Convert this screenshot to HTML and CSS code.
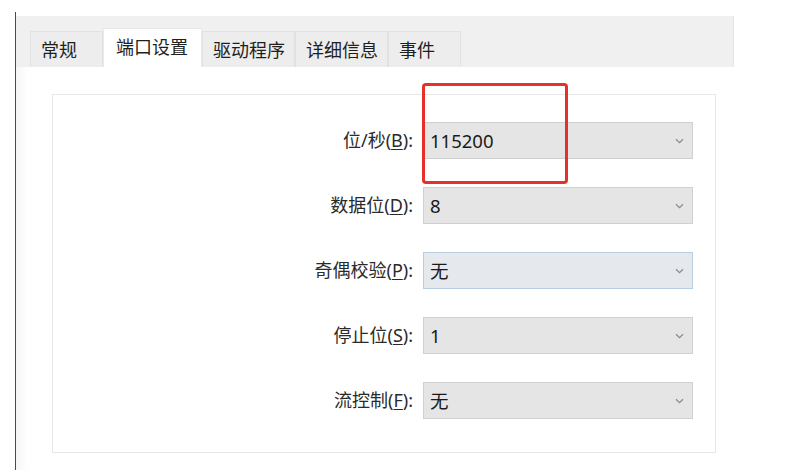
FILE: index.html
```html
<!DOCTYPE html>
<html lang="zh-CN">
<head>
<meta charset="utf-8">
<title>端口设置</title>
<link rel="stylesheet" href="styles.css">
</head>
<body>
<div class="window">
  <div class="tabstrip">
    <div class="tab">常规</div>
    <div class="tab active">端口设置</div>
    <div class="tab">驱动程序</div>
    <div class="tab">详细信息</div>
    <div class="tab">事件</div>
  </div>
  <div class="page">
    <div class="groupbox">
      <div class="label">位/秒(<u>B</u>):</div>
      <div class="combo"><span class="value">115200</span><svg class="chev" width="9" height="6" viewBox="0 0 9 6"><path d="M1 1.2 L4.5 4.6 L8 1.2" fill="none" stroke="#8a8a8a" stroke-width="1.2"/></svg></div>

      <div class="label">数据位(<u>D</u>):</div>
      <div class="combo"><span class="value">8</span><svg class="chev" width="9" height="6" viewBox="0 0 9 6"><path d="M1 1.2 L4.5 4.6 L8 1.2" fill="none" stroke="#8a8a8a" stroke-width="1.2"/></svg></div>

      <div class="label">奇偶校验(<u>P</u>):</div>
      <div class="combo hover"><span class="value">无</span><svg class="chev" width="9" height="6" viewBox="0 0 9 6"><path d="M1 1.2 L4.5 4.6 L8 1.2" fill="none" stroke="#8a8a8a" stroke-width="1.2"/></svg></div>

      <div class="label">停止位(<u>S</u>):</div>
      <div class="combo"><span class="value">1</span><svg class="chev" width="9" height="6" viewBox="0 0 9 6"><path d="M1 1.2 L4.5 4.6 L8 1.2" fill="none" stroke="#8a8a8a" stroke-width="1.2"/></svg></div>

      <div class="label">流控制(<u>F</u>):</div>
      <div class="combo"><span class="value">无</span><svg class="chev" width="9" height="6" viewBox="0 0 9 6"><path d="M1 1.2 L4.5 4.6 L8 1.2" fill="none" stroke="#8a8a8a" stroke-width="1.2"/></svg></div>
    </div>
  </div>
</div>
<div class="highlight"></div>
</body>
</html>
```
FILE: styles.css
```css
html, body {
  margin: 0;
  padding: 0;
  background: #ffffff;
}
body {
  font-family: "Noto Sans", "Noto Sans CJK SC", sans-serif;
  color: #1f1f1f;
  width: 806px;
  height: 470px;
  overflow: hidden;
  position: relative;
}
.window {
  margin: 12px 0 0 15px;
  width: 719px;
  height: 458px;
  border-left: 1px solid #4a4a4a;
  padding-top: 4px;
  box-sizing: border-box;
  display: flex;
  flex-direction: column;
}
.tabstrip {
  height: 51px;
  background: #f0f0f0;
  border-right: 1px solid #e6e6e6;
  display: flex;
  align-items: flex-end;
  padding-left: 14px;
  box-sizing: border-box;
}
.tab {
  height: 36px;
  line-height: 36px;
  min-width: 73px;
  padding: 0 9px 0 10px;
  box-sizing: border-box;
  font-size: 18px;
  color: #1f1f1f;
  background: #ededed;
  border: 1px solid #e2e2e2;
  border-bottom: none;
  white-space: nowrap;
}
.tab.active {
  height: 39px;
  padding: 0 13px 3px 12px;
  line-height: 36px;
  background: #ffffff;
  border-color: #e8e8e8;
  position: relative;
  z-index: 1;
}
.page {
  flex: 1;
  background: linear-gradient(to right, #f6f6f6 0, #ffffff 12px);
  padding: 27px 18px 0 36px;
  box-sizing: border-box;
}
.groupbox {
  height: 359px;
  border: 1px solid #e6e6e6;
  box-sizing: border-box;
  padding: 27px 22px 0 0;
  display: grid;
  grid-template-columns: 1fr 270px;
  grid-auto-rows: 37px;
  column-gap: 10px;
  row-gap: 28px;
}
.label {
  font-size: 18px;
  color: #2a2a2a;
  text-align: right;
  line-height: 37px;
  white-space: nowrap;
}
.label u {
  text-underline-offset: 2px;
  text-decoration-thickness: 1px;
}
.combo {
  background: #e5e5e5;
  border: 1px solid #d0d0d0;
  box-sizing: border-box;
  display: flex;
  align-items: center;
  justify-content: space-between;
  padding: 0 8px 0 6px;
}
.combo.hover {
  background: #e5e8ec;
  border-color: #b9cde0;
}
.value {
  font-size: 18.5px;
  color: #1a1a1a;
  line-height: 35px;
}
.chev {
  display: block;
}
.highlight {
  position: absolute;
  left: 422px;
  top: 83px;
  width: 146px;
  height: 101px;
  border: 3px solid #e5312a;
  border-radius: 4px;
  box-sizing: border-box;
}
```
